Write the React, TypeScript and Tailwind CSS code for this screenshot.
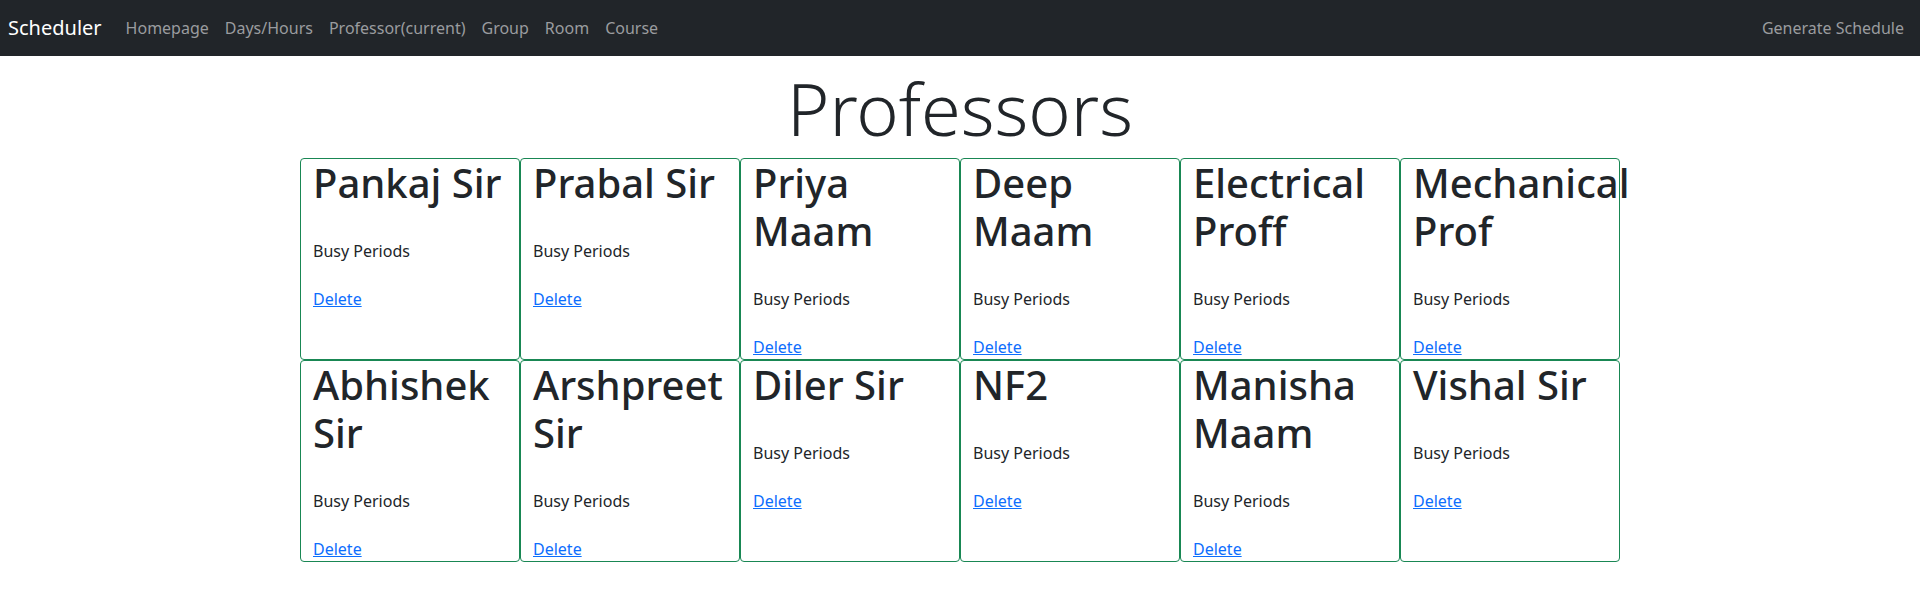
import React from "react";

const professors: string[] = [
  "Pankaj Sir",
  "Prabal Sir",
  "Priya Maam",
  "Deep Maam",
  "Electrical Proff",
  "Mechanical Prof",
  "Abhishek Sir",
  "Arshpreet Sir",
  "Diler Sir",
  "NF2",
  "Manisha Maam",
  "Vishal Sir",
];

const navLinks = ["Homepage", "Days/Hours", "Professor(current)", "Group", "Room", "Course"];

const ProfessorCard: React.FC<{ name: string }> = ({ name }) => (
  <div className="border border-[#198754] rounded px-3">
    <h1 className="text-[40px] leading-[48px] font-medium text-[#212529] mb-8">{name}</h1>
    <p className="text-base leading-6 text-[#212529] mb-6">Busy Periods</p>
    <a href="#" className="text-base leading-6 text-[#0d6efd] underline">
      Delete
    </a>
  </div>
);

export default function App() {
  return (
    <div className="min-h-screen bg-white text-[#212529]" style={{ fontFamily: '"Noto Sans", "Open Sans", sans-serif' }}>
      <nav className="h-14 bg-[#212529] flex items-center justify-between pl-2 pr-2">
        <div className="flex items-center">
          <a href="#" className="text-xl leading-[30px] text-white mr-4">
            Scheduler
          </a>
          {navLinks.map(link => (
            <a key={link} href="#" className="px-2 text-base leading-6 text-[#9a9c9f]">
              {link}
            </a>
          ))}
        </div>
        <a href="#" className="px-2 text-base leading-6 text-[#9a9c9f]">
          Generate Schedule
        </a>
      </nav>
      <h1 className="text-center text-[72px] leading-[86px] font-light mt-[9px] mb-[7px]">Professors</h1>
      <div className="mx-auto w-[1320px] grid grid-cols-6">
        {professors.map(name => (
          <ProfessorCard key={name} name={name} />
        ))}
      </div>
    </div>
  );
}
